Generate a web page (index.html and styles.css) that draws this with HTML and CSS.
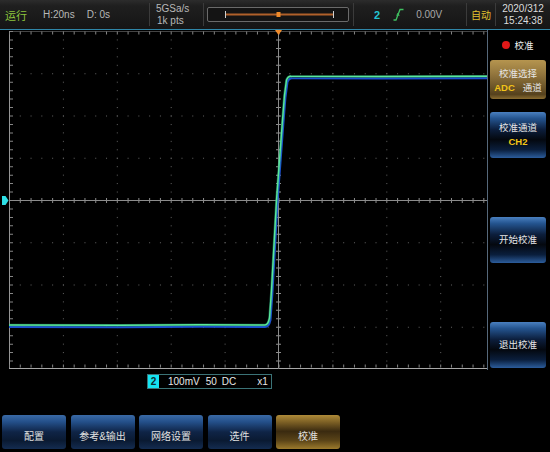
FILE: index.html
```html
<!DOCTYPE html>
<html lang="zh-CN">
<head>
    <meta charset="UTF-8">
    <meta name="viewport" content="width=device-width, initial-scale=1.0">
    <title>示波器 校准</title>
    <link rel="stylesheet" href="styles.css">
</head>
<body>
<div class="scope">
    <header class="topbar">
        <div class="cell cell_run">
            <span class="run">运行</span>
            <span class="hbase">H:20ns</span>
            <span class="delay">D: 0s</span>
        </div>
        <div class="cell cell_rate">
            <span>5GSa/s</span>
            <span>1k pts</span>
        </div>
        <div class="cell cell_mem">
            <div class="membar">
                <svg width="140" height="13" viewBox="0 0 140 13">
                    <line x1="17" y1="6.5" x2="125" y2="6.5" stroke="#b0602a" stroke-width="2"/>
                    <line x1="17.5" y1="3" x2="17.5" y2="10" stroke="#cfcfcf" stroke-width="1"/>
                    <line x1="125.5" y1="3" x2="125.5" y2="10" stroke="#cfcfcf" stroke-width="1"/>
                    <rect x="68.5" y="4" width="4" height="5" fill="#f08a2a"/>
                </svg>
            </div>
        </div>
        <div class="cell cell_trig">
            <span class="trig_ch">2</span>
            <svg class="edge" width="11" height="13" viewBox="0 0 11 13">
                <path d="M0.5 12 H3 L7 1.5 H10.5" fill="none" stroke="#3fc060" stroke-width="1.3"/>
                <path d="M3.6 7.5 L5.2 5 L6 8" fill="none" stroke="#3fc060" stroke-width="1"/>
            </svg>
            <span class="level">0.00V</span>
        </div>
        <div class="cell cell_mode">自动</div>
        <div class="cell cell_clock">
            <span>2020/312</span>
            <span>15:24:38</span>
        </div>
    </header>
    <div class="rule"></div>

    <main class="middle">
        <div class="screen">
            <svg width="487" height="340" viewBox="0 0 487 340">
                <defs>
                    <pattern id="vdots" x="9" y="1" width="53.9" height="8.45" patternUnits="userSpaceOnUse">
                        <rect width="1" height="1" fill="#646464"/>
                    </pattern>
                    <pattern id="hdots" x="9" y="1" width="10.78" height="42.25" patternUnits="userSpaceOnUse">
                        <rect width="1" height="1" fill="#646464"/>
                    </pattern>
                </defs>
                <!-- dotted divisions -->
                <rect x="9" y="1" width="478" height="338" fill="url(#vdots)"/>
                <rect x="9" y="1" width="478" height="338" fill="url(#hdots)"/>

                <!-- frame -->
                <line x1="9" y1="1.5" x2="487" y2="1.5" stroke="#444"/>
                <line x1="9.5" y1="1" x2="9.5" y2="339" stroke="#959595"/>
                <line x1="9" y1="338.5" x2="487" y2="338.5" stroke="#a8a8a8"/>
                <line x1="9" y1="3" x2="487" y2="3" stroke="#858585" stroke-width="3" stroke-dasharray="1 9.78"/>
                <line x1="9" y1="336" x2="487" y2="336" stroke="#858585" stroke-width="3" stroke-dasharray="1 9.78"/>
                <line x1="11.5" y1="1" x2="11.5" y2="339" stroke="#858585" stroke-width="3" stroke-dasharray="1 7.45"/>

                <!-- centre cross -->
                <line x1="9" y1="170.5" x2="487" y2="170.5" stroke="#8c8c8c"/>
                <line x1="9" y1="170.5" x2="487" y2="170.5" stroke="#8c8c8c" stroke-width="5" stroke-dasharray="1 9.78"/>
                <line x1="278.5" y1="1" x2="278.5" y2="339" stroke="#8c8c8c"/>
                <line x1="278.5" y1="1" x2="278.5" y2="339" stroke="#8c8c8c" stroke-width="5" stroke-dasharray="1 7.45"/>

                <!-- trigger position -->
                <path d="M275 0 H282 L278.5 5 Z" fill="#f08a2a"/>

                <!-- channel 2 ground marker -->
                <path d="M2 166 H5.5 L8.5 170.5 L5.5 175 H2 Z" fill="#2ee0e6"/>

                <!-- trace -->
                <path d="M9 297 L120 297.3 L200 296.8 L265 297 Q269 297 270.5 290 L272.5 262 L277.5 172 L280.5 132 L283.5 92 L285.5 67 L287.5 52 Q289 48 292 48.2 L380 48.5 L487 48.2"
                      fill="none" stroke="#1a4fcf" stroke-width="2"/>
                <path d="M9 295 L120 295.3 L200 294.8 L265 295 Q268 295 269.5 288 L271.5 260 L276.5 170 L279.5 130 L282.5 90 L284.5 65 L286.5 50 Q288 46 291 46.2 L380 46.5 L487 46.2"
                      fill="none" stroke="#2fae86" stroke-width="2.6" stroke-opacity="0.5"/>
                <path d="M9 295 L120 295.3 L200 294.8 L265 295 Q268 295 269.5 288 L271.5 260 L276.5 170 L279.5 130 L282.5 90 L284.5 65 L286.5 50 Q288 46 291 46.2 L380 46.5 L487 46.2"
                      fill="none" stroke="#5ae89a" stroke-width="1.4"/>
            </svg>
        </div>

        <aside class="menu">
            <div class="menu_title"><i class="dot"></i>校准</div>
            <div class="softkey gold first">
                <span>校准选择</span>
                <span><b class="yellow">ADC</b>&nbsp;&nbsp;&nbsp;通道</span>
            </div>
            <div class="softkey blue second">
                <span>校准通道</span>
                <span><b class="yellow">CH2</b></span>
            </div>
            <div class="softkey blue far">
                <span>开始校准</span>
            </div>
            <div class="softkey blue far">
                <span>退出校准</span>
            </div>
        </aside>
    </main>

    <footer class="bottom">
        <div class="chinfo">
            <span class="chnum">2</span>
            <span class="volts">100mV</span>
            <span class="imp">50</span>
            <span class="coup">DC</span>
            <span class="probe">x1</span>
        </div>
        <nav class="bottom_keys">
            <div class="bkey">配置</div>
            <div class="bkey">参考&amp;输出</div>
            <div class="bkey">网络设置</div>
            <div class="bkey">选件</div>
            <div class="bkey active">校准</div>
        </nav>
    </footer>
</div>
</body>
</html>
```

FILE: styles.css
```css
html, body {
    margin: 0;
    padding: 0;
    background: #000;
}
body {
    width: 550px;
    height: 452px;
    overflow: hidden;
    font-family: "Liberation Sans", "Noto Sans CJK SC", sans-serif;
    font-size: 10px;
    color: #d8d8d8;
}
.scope {
    display: flex;
    flex-direction: column;
    width: 550px;
    height: 452px;
}

/* top status bar */
.topbar {
    display: flex;
    height: 29px;
    background: linear-gradient(#2c2c2c, #1f1f1f 20%, #151515);
}
.cell {
    box-sizing: border-box;
    height: 23px;
    margin-top: 3px;
    border-right: 1px solid #3b3b3b;
    display: flex;
    align-items: center;
}
.cell_run { width: 150px; }
.cell_run .run {
    color: #8cc43c;
    font-size: 11px;
    margin-left: 5px;
}
.cell_run .hbase {
    color: #b8b8b8;
    margin-left: 16px;
}
.cell_run .delay {
    color: #b8b8b8;
    margin-left: 12px;
}
.cell_rate {
    width: 54px;
    flex-direction: column;
    align-items: flex-start;
    justify-content: center;
    padding-left: 6px;
    line-height: 12px;
    color: #b8b8b8;
}
.cell_rate span:last-child { padding-left: 1px; }
.cell_mem { width: 150px; }
.membar {
    box-sizing: border-box;
    width: 142px;
    height: 15px;
    margin-left: 3px;
    border: 1px solid #6a6a6a;
    border-radius: 2px;
    background: #141414;
}
.membar svg { display: block; }
.cell_trig { width: 113px; }
.trig_ch {
    color: #22c4d4;
    font-weight: bold;
    font-size: 11px;
    margin-left: 20px;
}
.edge { margin-left: 13px; }
.level {
    color: #a8a8a8;
    margin-left: 12px;
}
.cell_mode {
    width: 29px;
    justify-content: center;
    color: #e2c22e;
}
.cell_clock {
    width: 54px;
    border-right: none;
    flex-direction: column;
    justify-content: center;
    line-height: 12px;
    color: #dcdcdc;
}
.rule {
    height: 1px;
    background: #2f86a8;
}

/* scope screen + side menu */
.middle {
    display: flex;
    height: 340px;
}
.screen {
    width: 487px;
    height: 340px;
}
.screen svg { display: block; }
.menu {
    box-sizing: border-box;
    width: 63px;
    border-left: 1px solid #56687a;
    padding-left: 2px;
}
.menu_title {
    height: 30px;
    display: flex;
    align-items: center;
    justify-content: center;
    color: #f0f0f0;
    font-size: 9.5px;
    padding-right: 4px;
}
.menu_title .dot {
    width: 8px;
    height: 8px;
    border-radius: 50%;
    background: #e01818;
    margin-right: 4px;
}
.softkey {
    box-sizing: border-box;
    width: 56px;
    height: 46px;
    border-radius: 3px;
    display: flex;
    flex-direction: column;
    align-items: center;
    justify-content: center;
    font-size: 9.5px;
    line-height: 14px;
    color: #e6e6e6;
}
.softkey.first { height: 39px; padding-top: 2px; }
.softkey.second { margin-top: 13px; }
.softkey.far { margin-top: 59px; }
.softkey.gold {
    background: linear-gradient(#b6954f, #94773e 35%, #6b5428 70%, #55411d 88%, #8a6c30);
}
.softkey.blue {
    background: linear-gradient(#4a80c0, #24548f 14%, #0c1e3c 38%, #04080f 60%, #0a1e3c 82%, #2c5d9c);
}
.yellow {
    color: #f2c418;
    font-weight: bold;
}

/* bottom area */
.bottom {
    height: 82px;
}
.chinfo {
    box-sizing: border-box;
    display: flex;
    align-items: center;
    width: 125px;
    height: 15px;
    margin: 4px 0 0 147px;
    border: 1px solid #3b7377;
    color: #e8e8e8;
}
.chnum {
    width: 11px;
    height: 13px;
    line-height: 13px;
    text-align: center;
    background: #14e4f2;
    color: #0c2a30;
    font-weight: bold;
}
.volts { margin-left: 9px; }
.imp { margin-left: 6px; }
.coup { margin-left: 5px; }
.probe { margin-left: 21px; }
.bottom_keys {
    display: flex;
    gap: 4.5px;
    margin-top: 26px;
    padding-left: 2px;
}
.bkey {
    width: 64px;
    height: 34px;
    border-radius: 3px;
    box-sizing: border-box;
    padding-top: 13px;
    text-align: center;
    color: #e0e0e0;
    background: linear-gradient(#3a6aa6, #24508a 20%, #0f2446 50%, #0a1a32 75%, #142c50);
}
.bkey.active {
    background: linear-gradient(#ae8a38, #7a5e24 22%, #3a2a10 48%, #5a4418 75%, #9c7a2c);
}
```
